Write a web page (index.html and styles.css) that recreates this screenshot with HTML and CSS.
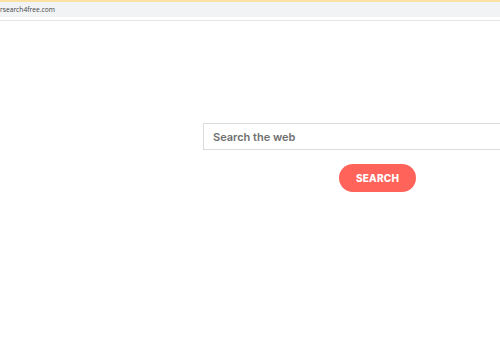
FILE: index.html
```html
<!DOCTYPE html>
<html lang="en">
<head>
    <meta charset="UTF-8">
    <title>Search</title>
    <link rel="stylesheet" href="styles.css">
</head>
<body>
    <div class="topbar">
        <div class="address">rsearch4free.com</div>
    </div>
    <div class="page">
        <form class="search-form" onsubmit="return false">
            <input class="search-input" type="text" placeholder="Search the web">
            <button class="search-button" type="submit">Search</button>
        </form>
    </div>
</body>
</html>
```
FILE: styles.css
```css
html, body {
    margin: 0;
    padding: 0;
    overflow: hidden;
    background: #ffffff;
    font-family: "Inter", "Open Sans", sans-serif;
}
.topbar {
    border-top: 2px solid #fbe2a4;
    border-bottom: 1px solid #e4e4e4;
    padding-bottom: 3px;
}
.address {
    height: 15px;
    background: #f1f3f4;
    color: #444;
    font-family: "Open Sans", sans-serif;
    font-size: 6.7px;
    line-height: 16px;
    padding-left: 0;
}
.page {
    padding-top: 102px;
    padding-left: 203px;
}
/* the field runs off the right edge in the shot, so it has no right border */
.search-form {
    display: flex;
    flex-direction: column;
    align-items: flex-start;
}
.search-input {
    box-sizing: border-box;
    width: 100%;
    height: 27px;
    border: 1px solid #dcdcdc;
    border-right: none;
    padding: 0 9px;
    font-family: "Inter", sans-serif;
    font-weight: 600;
    font-size: 11px;
    color: #555;
    outline: none;
}
.search-input::placeholder {
    color: #707070;
}
.search-button {
    margin-top: 14px;
    margin-left: 136px;
    width: 77px;
    height: 28px;
    border: none;
    border-radius: 14px;
    background: #ff635a;
    color: #fff;
    font-family: "Inter", sans-serif;
    font-weight: 800;
    font-size: 10px;
    text-transform: uppercase;
    letter-spacing: 0.2px;
    cursor: pointer;
}
```
